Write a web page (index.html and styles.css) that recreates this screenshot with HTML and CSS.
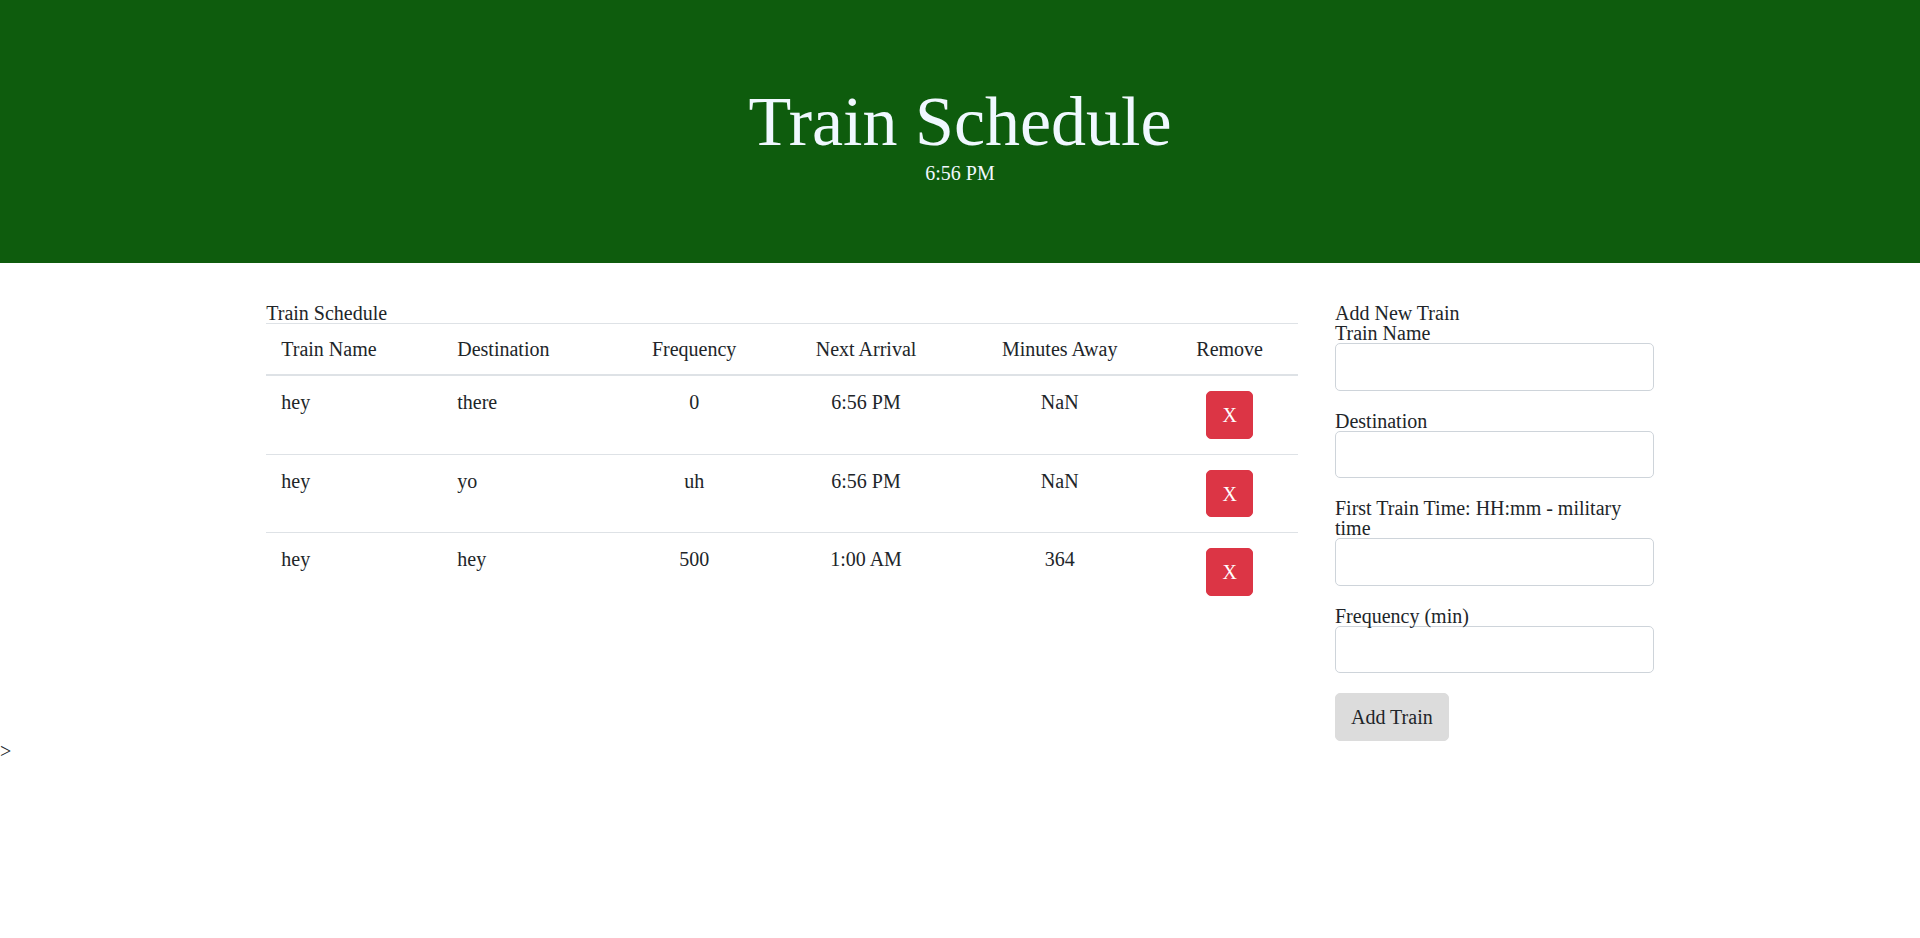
FILE: index.html
```html
<!DOCTYPE html>
<html lang="en">
<head>
<meta charset="utf-8">
<title>Train Schedule</title>
<link rel="stylesheet" href="styles.css">
</head>
<body>
<header class="hero">
  <h1 class="hero-title">Train Schedule</h1>
  <div class="hero-time">6:56 PM</div>
</header>
<main class="main">
  <section class="schedule">
    <div class="section-label">Train Schedule</div>
    <table class="table">
      <thead>
        <tr>
          <th class="left">Train Name</th>
          <th class="left">Destination</th>
          <th>Frequency</th>
          <th>Next Arrival</th>
          <th>Minutes Away</th>
          <th>Remove</th>
        </tr>
      </thead>
      <tbody>
        <tr>
          <td class="left">hey</td>
          <td class="left">there</td>
          <td>0</td>
          <td>6:56 PM</td>
          <td>NaN</td>
          <td><button class="btn-remove" type="button">X</button></td>
        </tr>
        <tr>
          <td class="left">hey</td>
          <td class="left">yo</td>
          <td>uh</td>
          <td>6:56 PM</td>
          <td>NaN</td>
          <td><button class="btn-remove" type="button">X</button></td>
        </tr>
        <tr>
          <td class="left">hey</td>
          <td class="left">hey</td>
          <td>500</td>
          <td>1:00 AM</td>
          <td>364</td>
          <td><button class="btn-remove" type="button">X</button></td>
        </tr>
      </tbody>
    </table>
  </section>
  <section class="add-form">
    <div class="section-label">Add New Train</div>
    <div class="form-group">
      <label class="field-label" for="name">Train Name</label>
      <input class="field-input" id="name" type="text">
    </div>
    <div class="form-group">
      <label class="field-label" for="dest">Destination</label>
      <input class="field-input" id="dest" type="text">
    </div>
    <div class="form-group">
      <label class="field-label" for="first">First Train Time: HH:mm - military time</label>
      <input class="field-input" id="first" type="text">
    </div>
    <div class="form-group">
      <label class="field-label" for="freq">Frequency (min)</label>
      <input class="field-input" id="freq" type="text">
    </div>
    <button class="btn-add" type="button">Add Train</button>
  </section>
</main>
<div class="stray">&gt;</div>
</body>
</html>
```
FILE: styles.css
```css
* {
  box-sizing: border-box;
}

html, body {
  margin: 0;
  padding: 0;
}

body {
  font-family: "Liberation Serif", "Times New Roman", serif;
  font-size: 20px;
  line-height: 20px;
  color: #212529;
  background: #fff;
}

.hero {
  background-color: #0e5c0d;
  color: #f0f8ff;
  text-align: center;
  padding: 80px 0 81px;
}

.hero-title {
  margin: 0;
  font-size: 70px;
  line-height: 84px;
  font-weight: 400;
}

.hero-time {
  font-size: 20px;
  line-height: 18px;
}

.main {
  width: 1387.5px;
  margin: 40px auto 0;
  display: grid;
  grid-template-columns: 1031.25px 318.75px;
  column-gap: 37.5px;
  align-items: start;
}

.section-label {
  line-height: 20px;
}

.table {
  width: 100%;
  border-collapse: collapse;
  margin-bottom: 20px;
  color: #212529;
}

.table th,
.table td {
  padding: 15px;
  border-top: 1px solid #dee2e6;
  vertical-align: top;
  text-align: center;
  font-weight: 400;
  line-height: 23px;
}

.table thead th {
  vertical-align: bottom;
  line-height: 20px;
  border-bottom: 2px solid #dee2e6;
}

.table .left {
  text-align: left;
}

.btn-remove {
  display: inline-block;
  font-family: "Liberation Serif", "Times New Roman", serif;
  font-size: 20px;
  line-height: 30px;
  padding: 8px 15px 7.5px;
  color: #fff;
  background-color: #dc3545;
  border: 1px solid #dc3545;
  border-radius: 5px;
  vertical-align: top;
}

.form-group {
  margin-bottom: 20px;
}

.field-label {
  display: block;
  line-height: 20px;
}

.field-input {
  display: block;
  width: 100%;
  height: 47.5px;
  padding: 7.5px 15px;
  font-family: "Liberation Serif", "Times New Roman", serif;
  font-size: 20px;
  color: #495057;
  background: #fff;
  border: 1px solid #ced4da;
  border-radius: 5px;
}

.btn-add {
  display: block;
  font-family: "Liberation Serif", "Times New Roman", serif;
  font-size: 20px;
  line-height: 30px;
  padding: 8px 15px 7.5px;
  color: #212529;
  background-color: #dcdcdc;
  border: 1px solid #dcdcdc;
  border-radius: 5px;
}

.stray {
  line-height: 20px;
}
```
